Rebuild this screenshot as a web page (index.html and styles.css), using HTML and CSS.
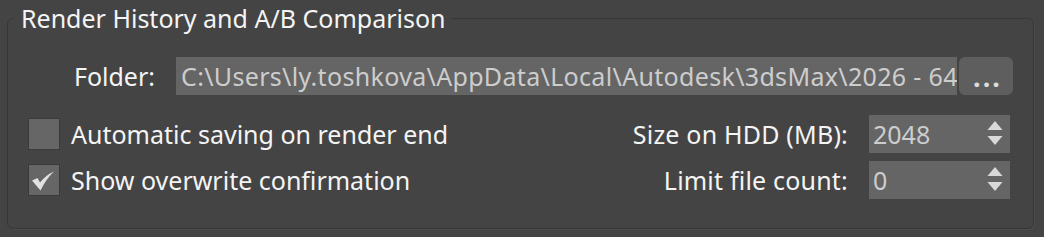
FILE: index.html
```html
<!DOCTYPE html>
<html lang="en">
<head>
  <meta charset="UTF-8" />
  <title>Render History and A/B Comparison</title>
  <link rel="stylesheet" href="styles.css">
</head>
<body>

  <fieldset class="group">
    <legend>Render History and A/B Comparison</legend>

    <div class="folder-row">
      <label class="folder-label">Folder:</label>
      <div class="path-field">C:\Users\ly.toshkova\AppData\Local\Autodesk\3dsMax\2026 - 64bit\ENU\temp\RenderHistory</div>
      <button class="browse-button">...</button>
    </div>

    <div class="options">
      <div class="check-item">
        <span class="checkbox"></span>
        <span>Automatic saving on render end</span>
      </div>
      <span class="field-label">Size on HDD (MB):</span>
      <div class="spinner">
        <span class="spinner-value">2048</span>
        <svg class="spinner-arrows" width="16" height="26" viewBox="0 0 16 26">
          <path d="M8 0 L15.5 9 L0.5 9 Z" fill="#d9d9d9"/>
          <path d="M0.5 15 L15.5 15 L8 24 Z" fill="#d9d9d9"/>
        </svg>
      </div>

      <div class="check-item">
        <span class="checkbox">
          <svg width="32" height="32" viewBox="0 0 32 32">
            <path d="M4 16.5 L9.5 14 L12 18.5 Q18 11 26 7.5 Q18 15 12.5 26.5 Z" fill="#e2e2e2"/>
          </svg>
        </span>
        <span>Show overwrite confirmation</span>
      </div>
      <span class="field-label">Limit file count:</span>
      <div class="spinner">
        <span class="spinner-value">0</span>
        <svg class="spinner-arrows" width="16" height="26" viewBox="0 0 16 26">
          <path d="M8 0 L15.5 9 L0.5 9 Z" fill="#d9d9d9"/>
          <path d="M0.5 15 L15.5 15 L8 24 Z" fill="#d9d9d9"/>
        </svg>
      </div>
    </div>
  </fieldset>

</body>
</html>
```

FILE: styles.css
```css
body {
  margin: 0;
  width: 1044px;
  height: 237px;
  overflow: hidden;
  background-color: #444444;
  font-family: 'Noto Sans', sans-serif;
  font-size: 25px;
  color: #f4f4f4;
}

.group {
  box-sizing: border-box;
  width: 1027px;
  min-width: 0;
  height: 226px;
  margin: 3px 0 0 7px;
  padding: 24px 20px 0 20px;
  border: 1px solid #373737;
  border-radius: 6px;
  box-shadow: 1px 1px 0 #4d4d4d;
}

.group legend {
  padding: 0 6px 0 7px;
  margin-left: -14px;
  line-height: 30px;
}

.folder-row {
  display: flex;
  align-items: center;
  height: 38px;
}

.folder-label {
  width: 127px;
  margin-right: 21px;
  text-align: right;
}

.path-field {
  flex: 1;
  min-width: 0;
  height: 38px;
  line-height: 38px;
  padding-left: 5px;
  background-color: #656565;
  color: #cdcdcd;
  letter-spacing: 0.33px;
  white-space: nowrap;
  overflow: hidden;
}

.browse-button {
  width: 54px;
  height: 38px;
  margin-left: 2px;
  padding: 0 0 0 3px;
  border: none;
  border-radius: 6px;
  background-color: #5e5e5e;
  color: #dcdcdc;
  font-family: inherit;
  font-size: 27px;
  font-weight: bold;
  letter-spacing: 2px;
}

.options {
  display: grid;
  grid-template-columns: 1fr auto 141px;
  grid-auto-rows: 38px;
  row-gap: 8px;
  align-items: center;
  margin-top: 20px;
  margin-right: 3px;
}

.check-item {
  display: flex;
  align-items: center;
  gap: 11px;
}

.checkbox {
  box-sizing: border-box;
  width: 32px;
  height: 32px;
  background-color: #666666;
  border: 1px solid #3a3a3a;
}

.checkbox svg {
  display: block;
  margin: -1px;
}

.field-label {
  margin-right: 21px;
  text-align: right;
  letter-spacing: 0.2px;
}

.spinner {
  display: flex;
  align-items: center;
  height: 38px;
  padding: 0 7px 0 4px;
  background-color: #656565;
  color: #cdcdcd;
}

.spinner-value {
  flex: 1;
}
```
